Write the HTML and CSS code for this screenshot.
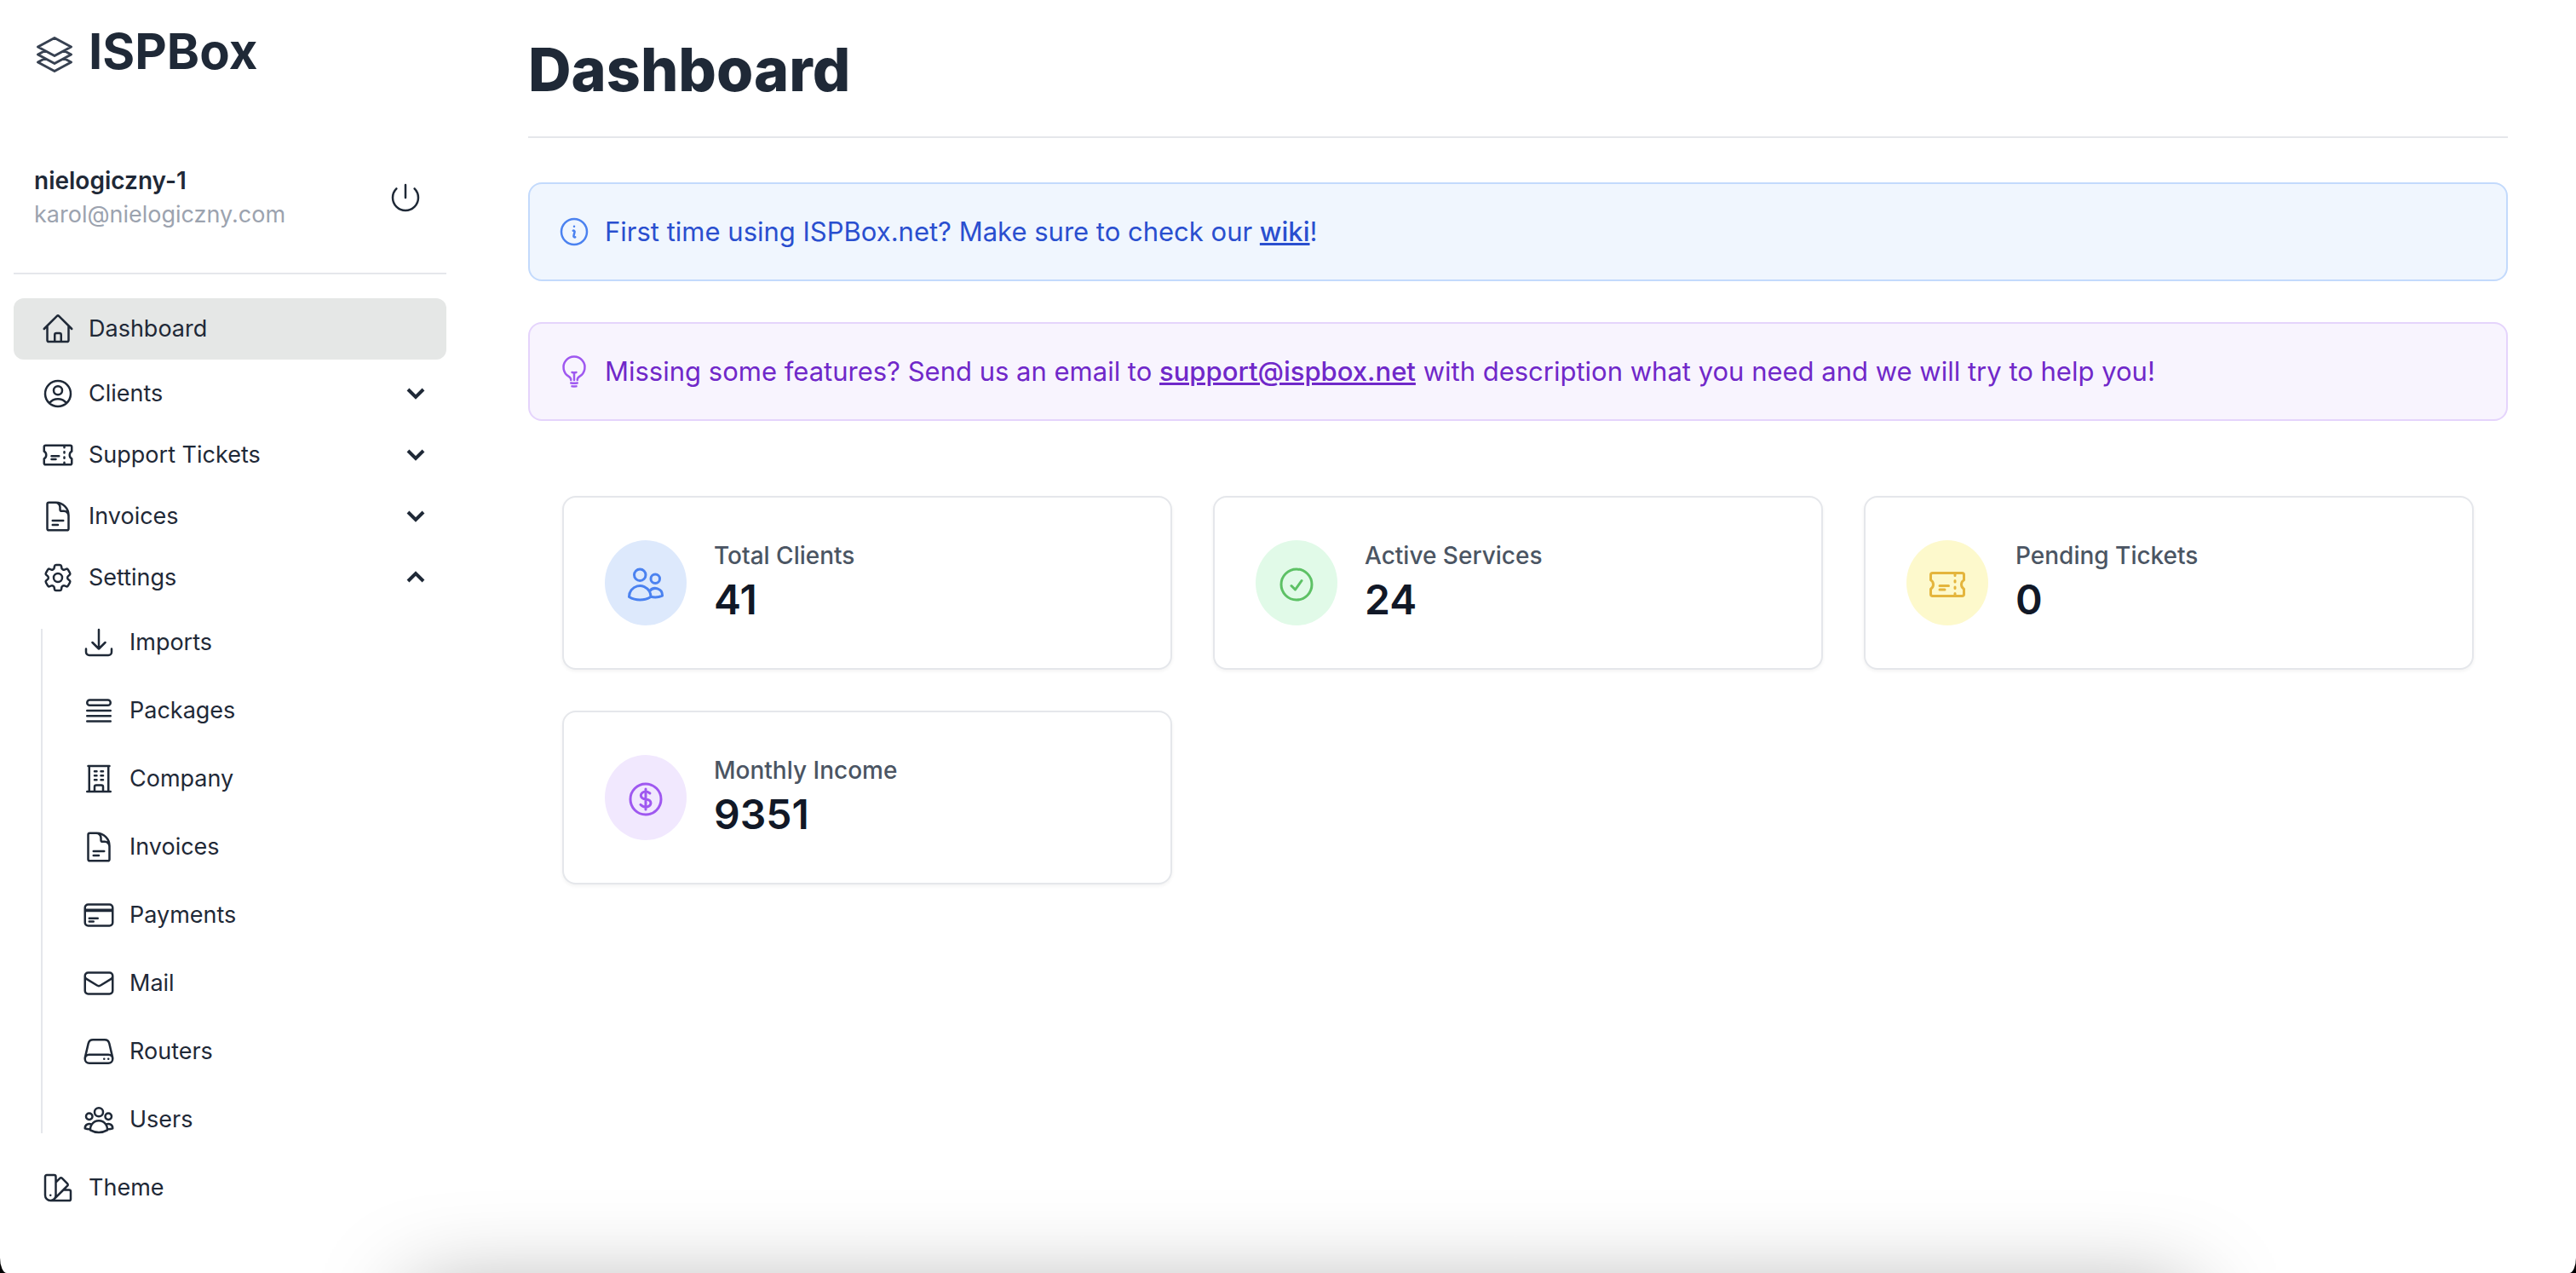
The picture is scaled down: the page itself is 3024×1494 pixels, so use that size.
FILE: index.html
```html
<!DOCTYPE html>
<html lang="en">
<head>
    <meta charset="UTF-8">
    <meta name="viewport" content="width=device-width, initial-scale=1.0">
    <title>ISPBox - Dashboard</title>
    <link rel="stylesheet" href="styles.css">
</head>
<body>
    <div class="app">
        <aside class="sidebar">
            <a href="#" class="brand">
                <svg class="brand-icon" viewBox="0 0 24 24"><path d="M6.429 9.75 2.25 12l4.179 2.25m0-4.5 5.571 3 5.571-3m-11.142 0L2.25 7.5 12 2.25l9.75 5.25-4.179 2.25m0 0L21.75 12l-4.179 2.25m0 0 4.179 2.25L12 21.75 2.25 16.5l4.179-2.25m11.142 0-5.571 3-5.571-3"/></svg>
                <span>ISPBox</span>
            </a>

            <div class="user">
                <div>
                    <p class="user-name">nielogiczny-1</p>
                    <p class="user-email">karol@nielogiczny.com</p>
                </div>
                <button type="button" class="logout" aria-label="Log out">
                    <svg viewBox="0 0 24 24"><path d="M5.636 5.636a9 9 0 1 0 12.728 0M12 3v9"/></svg>
                </button>
            </div>

            <nav>
                <ul class="menu">
                    <li>
                        <a href="#" class="menu-item active">
                            <svg viewBox="0 0 24 24"><path d="m2.25 12 8.954-8.955c.44-.439 1.152-.439 1.591 0L21.75 12M4.5 9.75v10.125c0 .621.504 1.125 1.125 1.125H9.75v-4.875c0-.621.504-1.125 1.125-1.125h2.25c.621 0 1.125.504 1.125 1.125V21h4.125c.621 0 1.125-.504 1.125-1.125V9.75M8.25 21h8.25"/></svg>
                            Dashboard
                        </a>
                    </li>
                    <li>
                        <button type="button" class="menu-item">
                            <svg viewBox="0 0 24 24"><path d="M17.982 18.725A7.488 7.488 0 0 0 12 15.75a7.488 7.488 0 0 0-5.982 2.975m11.963 0a9 9 0 1 0-11.963 0m11.963 0A8.966 8.966 0 0 1 12 21a8.966 8.966 0 0 1-5.982-2.275M15 9.75a3 3 0 1 1-6 0 3 3 0 0 1 6 0Z"/></svg>
                            Clients
                            <svg class="chevron" viewBox="0 0 24 24"><path d="m3 7 9 9 9-9"/></svg>
                        </button>
                    </li>
                    <li>
                        <button type="button" class="menu-item">
                            <svg viewBox="0 0 24 24"><path d="M16.5 6v.75m0 3v.75m0 3v.75m0 3V18m-9-5.25h5.25M7.5 15h3M3.375 5.25c-.621 0-1.125.504-1.125 1.125v3.026a2.999 2.999 0 0 1 0 5.198v3.026c0 .621.504 1.125 1.125 1.125h17.25c.621 0 1.125-.504 1.125-1.125v-3.026a2.999 2.999 0 0 1 0-5.198V6.375c0-.621-.504-1.125-1.125-1.125H3.375Z"/></svg>
                            Support Tickets
                            <svg class="chevron" viewBox="0 0 24 24"><path d="m3 7 9 9 9-9"/></svg>
                        </button>
                    </li>
                    <li>
                        <button type="button" class="menu-item">
                            <svg viewBox="0 0 24 24"><path d="M19.5 14.25v-2.625a3.375 3.375 0 0 0-3.375-3.375h-1.5A1.125 1.125 0 0 1 13.5 7.125v-1.5a3.375 3.375 0 0 0-3.375-3.375H8.25m0 12.75h7.5m-7.5 3H12M10.5 2.25H5.625c-.621 0-1.125.504-1.125 1.125v17.25c0 .621.504 1.125 1.125 1.125h12.75c.621 0 1.125-.504 1.125-1.125V11.25a9 9 0 0 0-9-9Z"/></svg>
                            Invoices
                            <svg class="chevron" viewBox="0 0 24 24"><path d="m3 7 9 9 9-9"/></svg>
                        </button>
                    </li>
                    <li>
                        <button type="button" class="menu-item" aria-expanded="true">
                            <svg viewBox="0 0 24 24"><path d="M9.594 3.94c.09-.542.56-.94 1.11-.94h2.593c.55 0 1.02.398 1.11.94l.213 1.281c.063.374.313.686.645.87.074.04.147.083.22.127.325.196.72.257 1.075.124l1.217-.456a1.125 1.125 0 0 1 1.37.49l1.296 2.247a1.125 1.125 0 0 1-.26 1.431l-1.003.827c-.293.241-.438.613-.43.992a7.723 7.723 0 0 1 0 .255c-.008.378.137.75.43.991l1.004.827c.424.35.534.955.26 1.43l-1.298 2.247a1.125 1.125 0 0 1-1.369.491l-1.217-.456c-.355-.133-.75-.072-1.076.124a6.47 6.47 0 0 1-.22.128c-.331.183-.581.495-.644.869l-.213 1.281c-.09.543-.56.94-1.11.94h-2.594c-.55 0-1.019-.398-1.11-.94l-.213-1.281c-.062-.374-.312-.686-.644-.87a6.52 6.52 0 0 1-.22-.127c-.325-.196-.72-.257-1.076-.124l-1.217.456a1.125 1.125 0 0 1-1.369-.49l-1.297-2.247a1.125 1.125 0 0 1 .26-1.431l1.004-.827c.292-.24.437-.613.43-.991a6.932 6.932 0 0 1 0-.255c.007-.38-.138-.751-.43-.992l-1.004-.827a1.125 1.125 0 0 1-.26-1.43l1.297-2.247a1.125 1.125 0 0 1 1.37-.491l1.216.456c.356.133.751.072 1.076-.124.072-.044.146-.086.22-.128.332-.183.582-.495.644-.869l.214-1.28Z"/><path d="M15 12a3 3 0 1 1-6 0 3 3 0 0 1 6 0Z"/></svg>
                            Settings
                            <svg class="chevron" viewBox="0 0 24 24"><path d="m3 16 9-9 9 9"/></svg>
                        </button>
                        <ul class="submenu">
                            <li>
                                <a href="#">
                                    <svg viewBox="0 0 24 24"><path d="M3 16.5v2.25A2.25 2.25 0 0 0 5.25 21h13.5A2.25 2.25 0 0 0 21 18.75V16.5M16.5 12 12 16.5m0 0L7.5 12m4.5 4.5V3"/></svg>
                                    Imports
                                </a>
                            </li>
                            <li>
                                <a href="#">
                                    <svg viewBox="0 0 24 24"><path d="M3.75 12h16.5m-16.5 3.75h16.5M3.75 19.5h16.5M5.625 4.5h12.75a1.875 1.875 0 0 1 0 3.75H5.625a1.875 1.875 0 0 1 0-3.75Z"/></svg>
                                    Packages
                                </a>
                            </li>
                            <li>
                                <a href="#">
                                    <svg viewBox="0 0 24 24"><path d="M3.75 21h16.5M4.5 3h15M5.25 3v18m13.5-18v18M9 6.75h1.5m-1.5 3h1.5m-1.5 3h1.5m3-6H15m-1.5 3H15m-1.5 3H15M9 21v-3.375c0-.621.504-1.125 1.125-1.125h3.75c.621 0 1.125.504 1.125 1.125V21"/></svg>
                                    Company
                                </a>
                            </li>
                            <li>
                                <a href="#">
                                    <svg viewBox="0 0 24 24"><path d="M19.5 14.25v-2.625a3.375 3.375 0 0 0-3.375-3.375h-1.5A1.125 1.125 0 0 1 13.5 7.125v-1.5a3.375 3.375 0 0 0-3.375-3.375H8.25m0 12.75h7.5m-7.5 3H12M10.5 2.25H5.625c-.621 0-1.125.504-1.125 1.125v17.25c0 .621.504 1.125 1.125 1.125h12.75c.621 0 1.125-.504 1.125-1.125V11.25a9 9 0 0 0-9-9Z"/></svg>
                                    Invoices
                                </a>
                            </li>
                            <li>
                                <a href="#">
                                    <svg viewBox="0 0 24 24"><path d="M2.25 8.25h19.5M2.25 9h19.5m-16.5 5.25h6m-6 2.25h3m-3.75 3h15a2.25 2.25 0 0 0 2.25-2.25V6.75A2.25 2.25 0 0 0 19.5 4.5h-15a2.25 2.25 0 0 0-2.25 2.25v10.5A2.25 2.25 0 0 0 4.5 19.5Z"/></svg>
                                    Payments
                                </a>
                            </li>
                            <li>
                                <a href="#">
                                    <svg viewBox="0 0 24 24"><path d="M21.75 6.75v10.5a2.25 2.25 0 0 1-2.25 2.25h-15a2.25 2.25 0 0 1-2.25-2.25V6.75m19.5 0A2.25 2.25 0 0 0 19.5 4.5h-15a2.25 2.25 0 0 0-2.25 2.25m19.5 0v.243a2.25 2.25 0 0 1-1.07 1.916l-7.5 4.615a2.25 2.25 0 0 1-2.36 0L3.32 8.91a2.25 2.25 0 0 1-1.07-1.916V6.75"/></svg>
                                    Mail
                                </a>
                            </li>
                            <li>
                                <a href="#">
                                    <svg viewBox="0 0 24 24"><path d="M21.75 17.25v-.228a4.5 4.5 0 0 0-.12-1.03l-2.268-9.64a3.375 3.375 0 0 0-3.285-2.602H7.923a3.375 3.375 0 0 0-3.285 2.602l-2.268 9.64a4.5 4.5 0 0 0-.12 1.03v.228m19.5 0a3 3 0 0 1-3 3H5.25a3 3 0 0 1-3-3m19.5 0a3 3 0 0 0-3-3H5.25a3 3 0 0 0-3 3m16.5 0h.008v.008h-.008v-.008Zm-3 0h.008v.008h-.008v-.008Z"/></svg>
                                    Routers
                                </a>
                            </li>
                            <li>
                                <a href="#">
                                    <svg viewBox="0 0 24 24"><path d="M18 18.72a9.094 9.094 0 0 0 3.741-.479 3 3 0 0 0-4.682-2.72m.94 3.198.001.031c0 .225-.012.447-.037.666A11.944 11.944 0 0 1 12 21c-2.17 0-4.207-.576-5.963-1.584A6.062 6.062 0 0 1 6 18.719m12 0a5.971 5.971 0 0 0-.941-3.197m0 0A5.995 5.995 0 0 0 12 12.75a5.995 5.995 0 0 0-5.058 2.772m0 0a3 3 0 0 0-4.681 2.72 8.986 8.986 0 0 0 3.74.477m.94-3.197a5.971 5.971 0 0 0-.94 3.197M15 6.75a3 3 0 1 1-6 0 3 3 0 0 1 6 0Zm6 3a2.25 2.25 0 1 1-4.5 0 2.25 2.25 0 0 1 4.5 0Zm-13.5 0a2.25 2.25 0 1 1-4.5 0 2.25 2.25 0 0 1 4.5 0Z"/></svg>
                                    Users
                                </a>
                            </li>
                        </ul>
                    </li>
                    <li>
                        <a href="#" class="menu-item">
                            <svg viewBox="0 0 24 24"><path d="M4.098 19.902a3.75 3.75 0 0 0 5.304 0l6.401-6.402M6.75 21A3.75 3.75 0 0 1 3 17.25V4.125C3 3.504 3.504 3 4.125 3h5.25c.621 0 1.125.504 1.125 1.125v4.072M6.75 21a3.75 3.75 0 0 0 3.75-3.75V8.197M6.75 21h13.125c.621 0 1.125-.504 1.125-1.125v-5.25c0-.621-.504-1.125-1.125-1.125h-4.072M10.5 8.197l2.88-2.88c.438-.439 1.15-.439 1.59 0l3.712 3.713c.44.44.44 1.152 0 1.59l-2.879 2.88M6.75 17.25h.008v.008H6.75v-.008Z"/></svg>
                            Theme
                        </a>
                    </li>
                </ul>
            </nav>
        </aside>

        <main class="content">
            <header class="page-header">
                <h1>Dashboard</h1>
            </header>

            <div class="alert alert-info">
                <svg viewBox="0 0 24 24"><path d="m11.25 11.25.041-.02a.75.75 0 0 1 1.063.852l-.708 2.836a.75.75 0 0 0 1.063.853l.041-.021M21 12a9 9 0 1 1-18 0 9 9 0 0 1 18 0Zm-9-3.75h.008v.008H12V8.25Z"/></svg>
                <p>First time using ISPBox.net? Make sure to check our <a href="#">wiki</a>!</p>
            </div>
            <div class="alert alert-tip">
                <svg viewBox="0 0 24 24"><path d="M12 18v-5.25m0 0a6.01 6.01 0 0 0 1.5-.189m-1.5.189a6.01 6.01 0 0 1-1.5-.189m3.75 7.478a12.06 12.06 0 0 1-4.5 0m3.75 2.383a14.406 14.406 0 0 1-3 0M14.25 18v-.192c0-.983.658-1.823 1.508-2.316a7.5 7.5 0 1 0-7.517 0c.85.493 1.509 1.333 1.509 2.316V18"/></svg>
                <p>Missing some features? Send us an email to <a href="mailto:support@ispbox.net">support@ispbox.net</a> with description what you need and we will try to help you!</p>
            </div>

            <section class="stats">
                <div class="card">
                    <div class="card-icon blue">
                        <svg viewBox="0 0 24 24"><path d="M15 19.128a9.38 9.38 0 0 0 2.625.372 9.337 9.337 0 0 0 4.121-.952 4.125 4.125 0 0 0-7.533-2.493M15 19.128v-.003c0-1.113-.285-2.16-.786-3.07M15 19.128v.106A12.318 12.318 0 0 1 8.624 21c-2.331 0-4.512-.645-6.374-1.766l-.001-.109a6.375 6.375 0 0 1 11.964-3.07M12 6.375a3.375 3.375 0 1 1-6.75 0 3.375 3.375 0 0 1 6.75 0Zm8.25 2.25a2.625 2.625 0 1 1-5.25 0 2.625 2.625 0 0 1 5.25 0Z"/></svg>
                    </div>
                    <div>
                        <p class="card-label">Total Clients</p>
                        <p class="card-value">41</p>
                    </div>
                </div>
                <div class="card">
                    <div class="card-icon green">
                        <svg viewBox="0 0 24 24"><path d="M9 12.75 11.25 15 15 9.75M21 12a9 9 0 1 1-18 0 9 9 0 0 1 18 0Z"/></svg>
                    </div>
                    <div>
                        <p class="card-label">Active Services</p>
                        <p class="card-value">24</p>
                    </div>
                </div>
                <div class="card">
                    <div class="card-icon yellow">
                        <svg viewBox="0 0 24 24"><path d="M16.5 6v.75m0 3v.75m0 3v.75m0 3V18m-9-5.25h5.25M7.5 15h3M3.375 5.25c-.621 0-1.125.504-1.125 1.125v3.026a2.999 2.999 0 0 1 0 5.198v3.026c0 .621.504 1.125 1.125 1.125h17.25c.621 0 1.125-.504 1.125-1.125v-3.026a2.999 2.999 0 0 1 0-5.198V6.375c0-.621-.504-1.125-1.125-1.125H3.375Z"/></svg>
                    </div>
                    <div>
                        <p class="card-label">Pending Tickets</p>
                        <p class="card-value">0</p>
                    </div>
                </div>
                <div class="card">
                    <div class="card-icon purple">
                        <svg viewBox="0 0 24 24"><path d="M12 6v12m-3-2.818.879.659c1.171.879 3.07.879 4.242 0 1.172-.879 1.172-2.303 0-3.182C13.536 12.219 12.768 12 12 12c-.725 0-1.45-.22-2.003-.659-1.106-.879-1.106-2.303 0-3.182s2.9-.879 4.006 0l.415.33M21 12a9 9 0 1 1-18 0 9 9 0 0 1 18 0Z"/></svg>
                    </div>
                    <div>
                        <p class="card-label">Monthly Income</p>
                        <p class="card-value">9351</p>
                    </div>
                </div>
            </section>
        </main>
    </div>
</body>
</html>
```

FILE: styles.css
```css
* {
    margin: 0;
    padding: 0;
    box-sizing: border-box;
}

body {
    background: #000;
    color: #1f2937;
    font-family: Inter, sans-serif;
    font-size: 27px;
    line-height: 40px;
}

a {
    color: inherit;
    text-decoration: none;
}

button {
    border: none;
    background: none;
    color: inherit;
    font: inherit;
    text-align: left;
    cursor: pointer;
}

ul {
    list-style: none;
}

svg {
    display: block;
    flex-shrink: 0;
    width: 40px;
    height: 40px;
    fill: none;
    stroke: currentColor;
    stroke-width: 1.5;
    stroke-linecap: round;
    stroke-linejoin: round;
}

.app {
    position: relative;
    display: flex;
    min-height: 100vh;
    background: #fff;
    border-radius: 0 0 8px 8px / 0 0 18px 18px;
    overflow: hidden;
}

/* Soft shadow rising from the bottom edge */
.app::after {
    content: "";
    position: absolute;
    left: 16%;
    right: 15%;
    top: 100%;
    height: 200px;
    margin-top: 24px;
    box-shadow: 0 0 110px rgba(0, 0, 0, 0.36);
    pointer-events: none;
}

/* Sidebar */
.sidebar {
    flex: 0 0 540px;
    padding: 24px 16px 64px;
}

.brand {
    display: flex;
    align-items: flex-end;
    gap: 16px;
    padding: 0 24px;
    font-size: 58px;
    font-weight: 700;
    line-height: 72px;
}

.brand-icon {
    width: 48px;
    height: 48px;
    margin-bottom: 8px;
    stroke: #374151;
}

.user {
    display: flex;
    align-items: center;
    justify-content: space-between;
    margin-top: 96px;
    margin-bottom: 28px;
    padding: 0 28px 48px 24px;
    border-bottom: 2px solid #e5e7eb;
}

.user-name {
    font-size: 28px;
    font-weight: 600;
}

.user-email {
    color: #9ca3af;
}

.menu-item {
    display: flex;
    align-items: center;
    gap: 16px;
    width: 100%;
    padding: 16px 24px 16px 32px;
    border-radius: 12px;
}

.menu-item.active {
    margin-bottom: 4px;
    background: #e5e7e6;
}

.chevron {
    width: 24px;
    height: 24px;
    margin-left: auto;
    stroke-width: 4;
    stroke-linecap: butt;
    stroke-linejoin: miter;
}

.submenu {
    display: flex;
    flex-direction: column;
    gap: 48px;
    margin: 24px 0 28px 32px;
    padding-left: 46px;
    border-left: 2px solid #e5e7eb;
}

.submenu a {
    display: flex;
    align-items: center;
    gap: 16px;
    height: 32px;
}

/* Main content */
.content {
    flex: 1;
    min-width: 0;
    padding: 0 80px;
}

.page-header {
    margin-bottom: 52px;
    padding: 42px 0 38px;
    border-bottom: 2px solid #e5e7eb;
}

h1 {
    font-size: 70px;
    font-weight: 800;
    line-height: 80px;
}

.alert {
    display: flex;
    align-items: center;
    gap: 16px;
    margin-bottom: 48px;
    padding: 32px;
    border: 2px solid;
    border-radius: 16px;
    font-size: 31px;
    line-height: 48px;
}

.alert a {
    font-weight: 500;
    text-decoration: underline;
}

.alert-info {
    border-color: #c3dafc;
    background: #f0f6fe;
    color: #2a4fcf;
}

.alert-info svg {
    stroke: #4b82f0;
}

.alert-tip {
    border-color: #e5d4fc;
    background: #f8f4fe;
    color: #7028c9;
}

.alert-tip svg {
    stroke: #9f58f0;
}

.stats {
    display: grid;
    grid-template-columns: repeat(3, 1fr);
    gap: 48px;
    padding: 40px;
}

.card {
    display: flex;
    align-items: center;
    gap: 32px;
    padding: 48px;
    border: 2px solid #e5e7eb;
    border-radius: 16px;
    background: #fff;
    box-shadow: 0 2px 4px rgba(0, 0, 0, 0.05);
}

.card-icon {
    padding: 28px 24px 24px;
    border-radius: 50%;
}

.card-icon svg {
    width: 48px;
    height: 48px;
}

.card-label {
    color: #4b5563;
    font-size: 28px;
    font-weight: 500;
}

.card-value {
    color: #111827;
    font-size: 48px;
    font-weight: 600;
    line-height: 64px;
}

.blue {
    background: #dde9fc;
    color: #4b82f0;
}

.green {
    background: #e1fae8;
    color: #5dc165;
}

.yellow {
    background: #fdf9cc;
    color: #e4b53d;
}

.purple {
    background: #f1e8fe;
    color: #9f58f0;
}
```
